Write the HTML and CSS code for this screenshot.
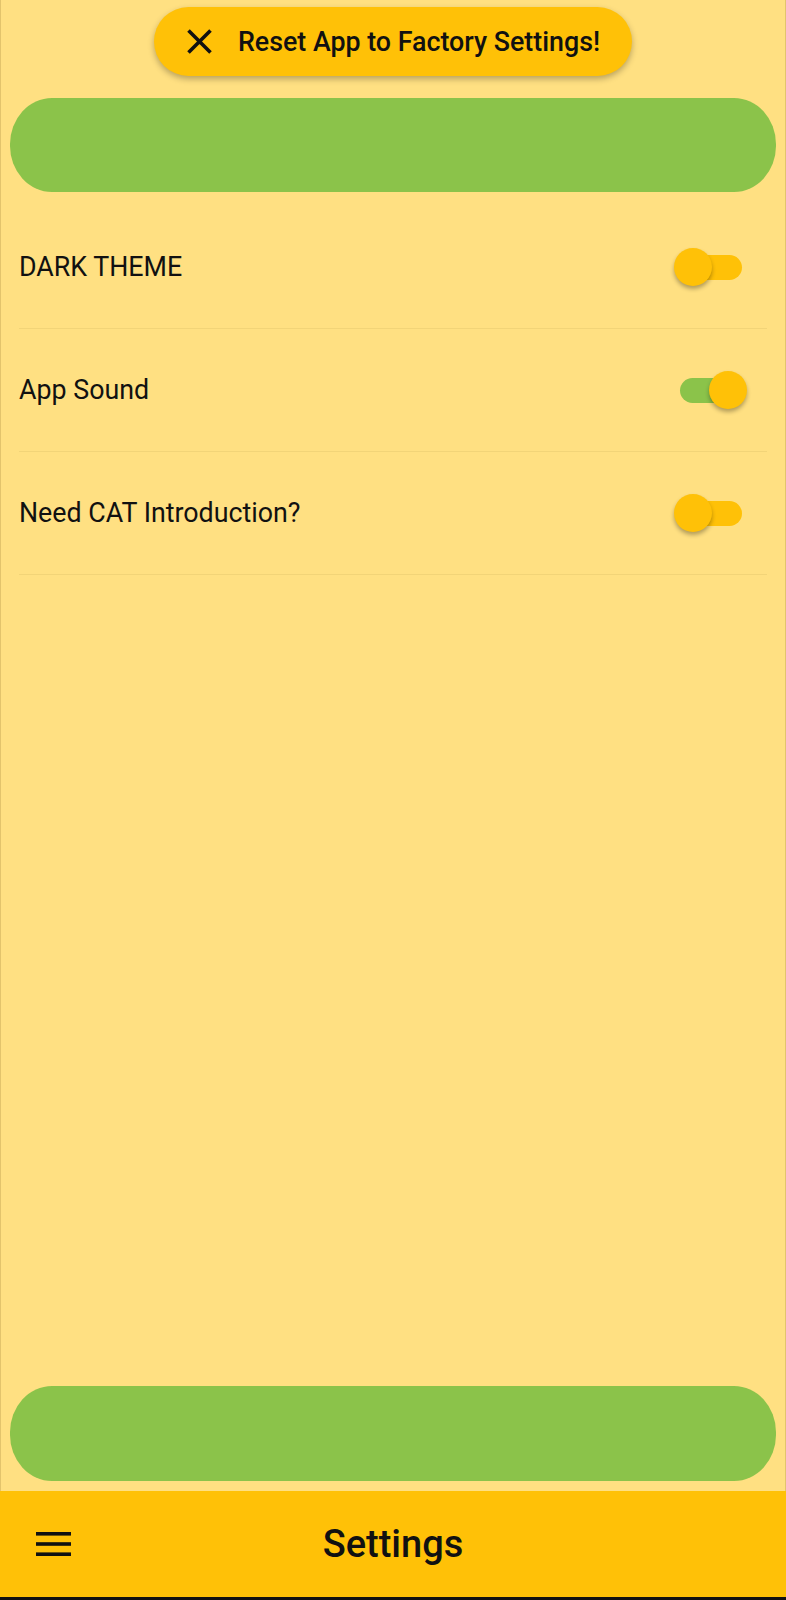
FILE: index.html
```html
<!DOCTYPE html>
<html lang="en">
<head>
<meta charset="utf-8">
<title>Settings</title>
<link rel="stylesheet" href="styles.css">
</head>
<body>
<div class="app">
  <div class="content">
    <div class="top">
      <button class="reset-pill">
        <svg class="close-icon" width="27" height="27" viewBox="0 0 27 27"><path d="M2.5 2.5 L24.5 24.5 M24.5 2.5 L2.5 24.5" stroke="#111" stroke-width="3.6" stroke-linecap="butt" fill="none"/></svg>
        <span class="reset-text">Reset App to Factory Settings!</span>
      </button>
    </div>
    <div class="green-bar green-top"></div>
    <div class="settings-list">
      <div class="setting-row">
        <span class="setting-label">DARK THEME</span>
        <span class="switch"><span class="track"></span><span class="thumb"></span></span>
      </div>
      <div class="setting-row">
        <span class="setting-label">App Sound</span>
        <span class="switch on"><span class="track"></span><span class="thumb"></span></span>
      </div>
      <div class="setting-row">
        <span class="setting-label">Need CAT Introduction?</span>
        <span class="switch"><span class="track"></span><span class="thumb"></span></span>
      </div>
    </div>
    <div class="green-bar green-bottom"></div>
  </div>
  <div class="bottom-bar">
    <svg class="menu-icon" width="35" height="24" viewBox="0 0 35 24"><rect x="0" y="0" width="35" height="3.6" fill="#111"/><rect x="0" y="10.2" width="35" height="3.6" fill="#111"/><rect x="0" y="20.4" width="35" height="3.6" fill="#111"/></svg>
    <span class="bar-title">Settings</span>
  </div>
</div>
</body>
</html>
```

FILE: styles.css
```css
* { box-sizing: border-box; }
html, body { margin: 0; padding: 0; }
body {
  background: #FFE082;
  font-family: Roboto, "Noto Sans", sans-serif;
  color: #111;
}
.app {
  height: 1600px;
  display: flex;
  flex-direction: column;
}
.content {
  flex: 1;
  display: flex;
  flex-direction: column;
  border-left: 1px solid #E3C46C;
  border-right: 1px solid #E3C46C;
}
.top {
  padding-top: 7px;
  display: flex;
  justify-content: center;
}
.reset-pill {
  height: 69px;
  border: none;
  border-radius: 35px;
  background: #FFC107;
  box-shadow: 0 3px 6px rgba(0,0,0,0.28);
  display: flex;
  align-items: center;
  padding: 0 32px 0 32px;
  gap: 25px;
  font-family: Roboto, sans-serif;
}
.close-icon { display: block; }
.reset-text {
  font-size: 26.8px;
  font-weight: 500;
  color: #111;
}
.green-bar {
  background: #8BC34A;
  margin: 0 9px;
  border-radius: 42px / 46px;
}
.green-top {
  margin-top: 22px;
  height: 94px;
}
.settings-list {
  margin-top: 14px;
  padding: 0 18px;
}
.setting-row {
  height: 123px;
  border-bottom: 1px solid #F2D478;
  display: flex;
  align-items: center;
  justify-content: space-between;
}
.setting-label {
  font-size: 26.8px;
  font-weight: 400;
  color: #111;
}
.switch {
  position: relative;
  width: 62px;
  height: 25px;
  margin-right: 25px;
}
.track {
  display: block;
  width: 62px;
  height: 25px;
  border-radius: 13px;
  background: #FFC107;
}
.switch.on .track { background: #8BC34A; }
.thumb {
  position: absolute;
  top: -6.5px;
  left: -6.5px;
  width: 38px;
  height: 38px;
  border-radius: 50%;
  background: #FFC107;
  box-shadow: 0 3px 4px rgba(0,0,0,0.3);
}
.switch.on .thumb { left: 29px; }
.green-bottom {
  margin-top: auto;
  margin-bottom: 10px;
  height: 95px;
}
.bottom-bar {
  height: 109px;
  background: #FFC107;
  border-bottom: 3px solid #111;
  display: flex;
  align-items: center;
  position: relative;
  padding-left: 36px;
}
.menu-icon { display: block; }
.bar-title {
  position: absolute;
  left: 0;
  right: 0;
  text-align: center;
  font-size: 38px;
  font-weight: 500;
  color: #111;
  pointer-events: none;
}
```
